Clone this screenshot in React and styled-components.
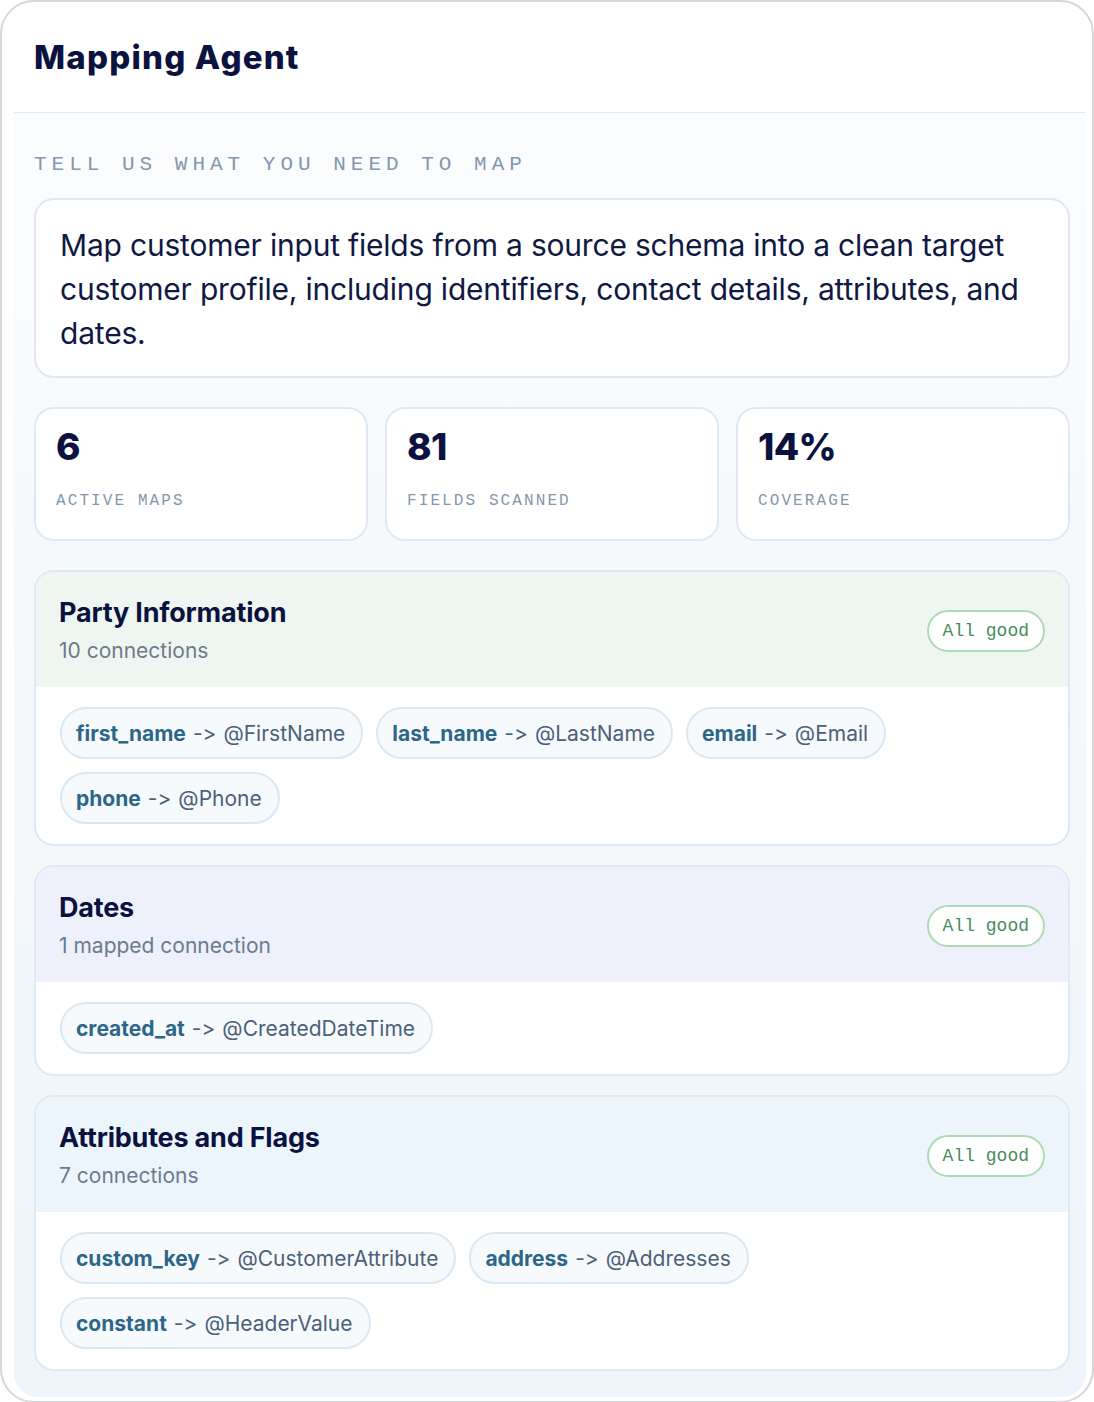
import React from "react";
import styled, { createGlobalStyle } from "styled-components";

const GlobalStyle = createGlobalStyle`
  * { box-sizing: border-box; }
  html, body { margin: 0; padding: 0; background: #ffffff; }
  body {
    font-family: Inter, "Noto Sans", sans-serif;
    font-feature-settings: "calt" 0, "liga" 0;
    color: #0d1440;
    -webkit-font-smoothing: antialiased;
  }
`;

const Frame = styled.div`
  width: 1094px;
  min-height: 1402px;
  border: 2px solid #d7d7d7;
  border-radius: 34px;
  padding: 0 6px 4px 12px;
  background: #ffffff;
  display: flex;
  flex-direction: column;
`;

const Header = styled.header`
  height: 111px;
  display: flex;
  align-items: center;
  padding-left: 20px;
  border-bottom: 1.5px solid #e5eaf0;
`;

const Title = styled.h1`
  margin: 0;
  font-family: Inter, sans-serif;
  font-weight: 800;
  font-size: 33px;
  letter-spacing: 1.2px;
  color: #0b1240;
`;

const Panel = styled.main`
  flex: 1;
  display: flex;
  flex-direction: column;
  padding: 39px 16px 26px 20px;
  background: linear-gradient(180deg, #fbfcfd 0%, #f4f8fb 50%, #eef4f9 100%);
  border-radius: 0 0 24px 24px;
`;

const Eyebrow = styled.div`
  font-family: "Liberation Mono", "DejaVu Sans Mono", monospace;
  font-size: 21px;
  line-height: 26px;
  letter-spacing: 5px;
  color: #8597ac;
  text-transform: uppercase;
  margin-bottom: 20px;
`;

const PromptBox = styled.div`
  background: #ffffff;
  border: 2px solid #e0e9f1;
  border-radius: 20px;
  padding: 23px 24px 21px;
  font-size: 30px;
  line-height: 44px;
  color: #101844;
  letter-spacing: -0.2px;
`;

const StatsRow = styled.div`
  display: grid;
  grid-template-columns: repeat(3, 1fr);
  gap: 17px;
  margin-top: 29px;
`;

const StatCard = styled.div`
  background: #ffffff;
  border: 2px solid #e0e9f1;
  border-radius: 20px;
  padding: 17px 20px 28px;
  display: flex;
  flex-direction: column;
  gap: 23px;
`;

const StatValue = styled.div`
  font-weight: 800;
  font-size: 37px;
  line-height: 42px;
  color: #0b1240;
  letter-spacing: -0.6px;
`;

const StatLabel = styled.div`
  font-family: "Liberation Mono", "DejaVu Sans Mono", monospace;
  font-size: 16px;
  line-height: 20px;
  letter-spacing: 2.1px;
  color: #8597ac;
  text-transform: uppercase;
`;

const Sections = styled.div`
  display: flex;
  flex-direction: column;
  gap: 19px;
  margin-top: 29px;
`;

const Section = styled.section`
  background: #ffffff;
  border: 2px solid #e0e9f1;
  border-radius: 20px;
  overflow: hidden;
`;

const SectionHead = styled.div`
  display: flex;
  align-items: center;
  justify-content: space-between;
  padding: 24px 23px 22px;
  background: ${(p) => p.$tint};
`;

const HeadText = styled.div`
  display: flex;
  flex-direction: column;
  gap: 8px;
`;

const SectionTitle = styled.h2`
  margin: 0;
  font-size: 27px;
  line-height: 33px;
  font-weight: 700;
  color: #0b1240;
  letter-spacing: -0.2px;
`;

const SectionMeta = styled.div`
  font-size: 21px;
  line-height: 28px;
  color: #6c7b8c;
`;

const Badge = styled.span`
  font-family: "Liberation Mono", "DejaVu Sans Mono", monospace;
  font-size: 18px;
  line-height: 22px;
  color: #4a8b5e;
  background: #ffffff;
  border: 2px solid #acdab6;
  border-radius: 999px;
  padding: 8px 14px;
`;

const ChipList = styled.div`
  display: flex;
  flex-wrap: wrap;
  gap: 13px;
  padding: 20px 24px;
`;

const Chip = styled.div`
  display: inline-flex;
  align-items: center;
  gap: 7px;
  height: 52px;
  padding: 0 16px 0 14px;
  background: #f7fafc;
  border: 2px solid #dce8f1;
  border-radius: 999px;
  font-size: 21px;
  color: #4c6079;
  white-space: nowrap;
`;

const ChipKey = styled.span`
  font-weight: 700;
  color: #2c6688;
`;

const sections = [
  {
    title: "Party Information",
    meta: "10 connections",
    tint: "#eff6f1",
    maps: [
      ["first_name", "@FirstName"],
      ["last_name", "@LastName"],
      ["email", "@Email"],
      ["phone", "@Phone"],
    ],
  },
  {
    title: "Dates",
    meta: "1 mapped connection",
    tint: "#eef0fb",
    maps: [["created_at", "@CreatedDateTime"]],
  },
  {
    title: "Attributes and Flags",
    meta: "7 connections",
    tint: "#edf5fc",
    maps: [
      ["custom_key", "@CustomerAttribute"],
      ["address", "@Addresses"],
      ["constant", "@HeaderValue"],
    ],
  },
];

const stats = [
  ["6", "Active maps"],
  ["81", "Fields scanned"],
  ["14%", "Coverage"],
];

export default function App() {
  return (
    <>
      <GlobalStyle />
      <Frame>
        <Header>
          <Title>Mapping Agent</Title>
        </Header>
        <Panel>
          <Eyebrow>Tell us what you need to map</Eyebrow>
          <PromptBox>
            Map customer input fields from a source schema into a clean target
            customer profile, including identifiers, contact details,
            attributes, and dates.
          </PromptBox>
          <StatsRow>
            {stats.map(([value, label]) => (
              <StatCard key={label}>
                <StatValue>{value}</StatValue>
                <StatLabel>{label}</StatLabel>
              </StatCard>
            ))}
          </StatsRow>
          <Sections>
            {sections.map((s) => (
              <Section key={s.title}>
                <SectionHead $tint={s.tint}>
                  <HeadText>
                    <SectionTitle>{s.title}</SectionTitle>
                    <SectionMeta>{s.meta}</SectionMeta>
                  </HeadText>
                  <Badge>All good</Badge>
                </SectionHead>
                <ChipList>
                  {s.maps.map(([from, to]) => (
                    <Chip key={from}>
                      <ChipKey>{from}</ChipKey>
                      <span>-&gt;</span>
                      <span>{to}</span>
                    </Chip>
                  ))}
                </ChipList>
              </Section>
            ))}
          </Sections>
        </Panel>
      </Frame>
    </>
  );
}
